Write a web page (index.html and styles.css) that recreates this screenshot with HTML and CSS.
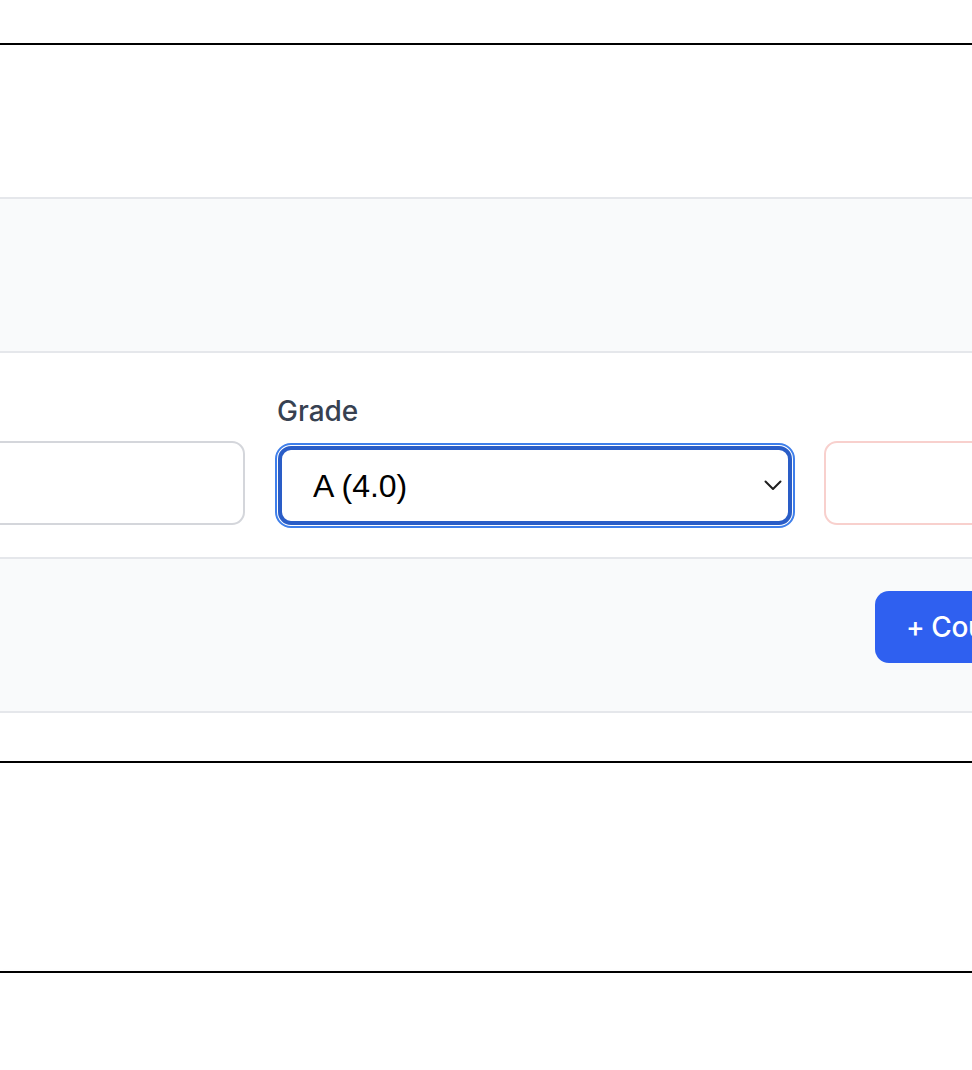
FILE: index.html
```html
<!DOCTYPE html>
<html lang="en">
<head>
<meta charset="utf-8">
<title>Course form</title>
<link rel="stylesheet" href="styles.css">
</head>
<body>
<div class="page">
  <div class="spacer-top"></div>
  <hr class="rule">
  <div class="blank blank-a"></div>
  <div class="panel"></div>
  <section class="form-row">
    <div class="grid">
      <div class="field">
        <label class="label label-hidden">Course</label>
        <input class="input" type="text">
      </div>
      <div class="field">
        <label class="label" for="grade">Grade</label>
        <div class="select-wrap">
          <select id="grade" class="select">
            <option>A (4.0)</option>
            <option>A- (3.7)</option>
            <option>B+ (3.3)</option>
            <option>B (3.0)</option>
          </select>
          <svg class="chevron" width="18" height="11" viewBox="0 0 18 11" aria-hidden="true">
            <path d="M1.5 1.5 L9 9 L16.5 1.5" fill="none" stroke="#1f1f1f" stroke-width="2" stroke-linecap="round" stroke-linejoin="round"/>
          </svg>
        </div>
      </div>
      <div class="field">
        <label class="label label-hidden">Credits</label>
        <input class="input input-error" type="text">
      </div>
    </div>
  </section>
  <div class="panel panel-actions">
    <button class="btn" type="button">+ Course</button>
  </div>
  <div class="blank blank-b"></div>
  <hr class="rule">
  <div class="blank blank-c"></div>
  <hr class="rule rule-shadow">
</div>
</body>
</html>
```

FILE: styles.css
```css
html, body {
  margin: 0;
  padding: 0;
  background: #ffffff;
  overflow: hidden;
}

.page {
  width: 972px;
  overflow: hidden;
  font-family: Inter, "Liberation Sans", sans-serif;
}

.spacer-top {
  height: 43px;
}

.rule {
  margin: 0;
  border: 0;
  height: 2px;
  background: #000000;
}

.rule-shadow {
  box-shadow: 0 4px 8px rgba(0, 0, 0, 0.08);
}

.blank-a {
  height: 152px;
}

.blank-b {
  height: 48px;
}

.blank-c {
  height: 208px;
}

.panel {
  height: 152px;
  background: #f9fafb;
  border-top: 2px solid #e5e7eb;
  border-bottom: 2px solid #e5e7eb;
}

.form-row {
  padding: 38px 0 32px;
}

.grid {
  display: grid;
  grid-template-columns: 515px 515px 515px;
  column-gap: 32px;
  margin-left: -270px;
  width: 1609px;
}

.field {
  display: flex;
  flex-direction: column;
  gap: 10px;
}

.label {
  font-family: Inter, "Liberation Sans", sans-serif;
  font-size: 28px;
  line-height: 40px;
  font-weight: 500;
  color: #374151;
  height: 40px;
}

.label-hidden {
  visibility: hidden;
}

.input {
  box-sizing: border-box;
  height: 84px;
  width: 100%;
  margin: 0;
  border: 2px solid #d4d6db;
  border-radius: 13px;
  background: #ffffff;
  outline: none;
}

.input-error {
  border-color: #f8d0cd;
}

.select-wrap {
  position: relative;
  height: 84px;
}

.select {
  box-sizing: border-box;
  appearance: none;
  -webkit-appearance: none;
  display: block;
  width: 514px;
  height: 79px;
  margin: 5px 0 0 1px;
  padding: 0 40px 0 31px;
  border: 4px solid #2a5dc7;
  border-radius: 13px;
  outline: 2px solid #3f7fea;
  outline-offset: 1px;
  background: #ffffff;
  font-family: "Liberation Sans", Arial, sans-serif;
  font-size: 32px;
  color: #000000;
}

.chevron {
  position: absolute;
  left: 487px;
  top: 39px;
  pointer-events: none;
}

.panel-actions {
  box-sizing: content-box;
  height: 120px;
  padding: 32px 0 0 875px;
}

.btn {
  display: block;
  height: 72px;
  min-width: 200px;
  padding: 0 31px;
  border: 0;
  border-radius: 14px;
  background: #2f60f0;
  color: #ffffff;
  font-family: Inter, "Liberation Sans", sans-serif;
  font-size: 28px;
  font-weight: 500;
  letter-spacing: -0.4px;
  white-space: nowrap;
  text-align: left;
}
```
